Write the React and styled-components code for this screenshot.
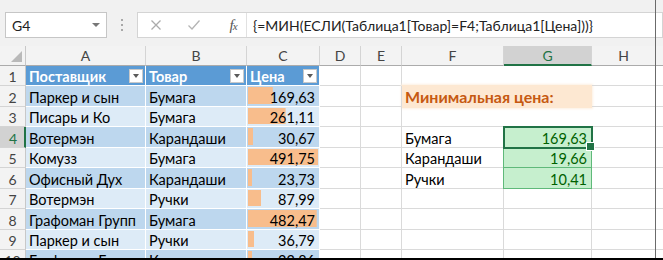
import React from 'react';
import styled, { createGlobalStyle, css } from 'styled-components';

const GlobalStyle = createGlobalStyle`
  html, body { margin: 0; padding: 0; background: #fff; }
  body { font-family: Lato, "Noto Sans", sans-serif; overflow: hidden; }
  * { box-sizing: border-box; }
`;

const COLS = [26, 120, 101, 73, 41, 41, 102, 88, 64];
const ROW_H = 20.44;
const GRID = '#dadada';
const FONT = '14.5px';

const Frame = styled.div`
  position: relative;
  width: 663px;
  height: 260px;
  overflow: hidden;
  display: flex;
  flex-direction: column;
  background: #fff;
  border-bottom: 2px solid #000;
  &::after {
    content: '';
    position: absolute;
    top: 0;
    bottom: 0;
    left: 655px;
    width: 1px;
    background: #6b6b6b;
  }
`;

const Toolbar = styled.div`
  height: 46px;
  flex: none;
  background: #f1f1f1;
  display: flex;
  align-items: flex-start;
  padding: 12px 0 0 5px;
`;

const NameBox = styled.div`
  width: 102px;
  height: 26px;
  background: #fff;
  border: 1px solid #c6c6c6;
  display: flex;
  align-items: center;
  justify-content: space-between;
  padding: 0 6px 0 6px;
  font-size: 14px;
  color: #222;
`;

const Caret = styled.span`
  width: 0;
  height: 0;
  border-left: 4px solid transparent;
  border-right: 4px solid transparent;
  border-top: 4px solid #777;
`;

const Grip = styled.div`
  width: 30px;
  height: 26px;
  display: flex;
  flex-direction: column;
  align-items: center;
  justify-content: center;
  gap: 3px;
`;

const GripDot = styled.span`
  width: 2px;
  height: 2px;
  background: #a8a8a8;
`;

const FormulaPanel = styled.div`
  flex: 1;
  height: 26px;
  background: #fff;
  border: 1px solid #d4d4d4;
  display: flex;
  align-items: stretch;
`;

const FxButtons = styled.div`
  width: 109px;
  display: flex;
  align-items: center;
  padding-left: 12px;
  border-right: 1px solid #e1e1e1;
`;

const IconSlot = styled.span`
  width: ${p => p.$w}px;
  display: flex;
  align-items: center;
  justify-content: center;
`;

const Fx = styled.span`
  font-family: "Liberation Serif", serif;
  font-style: italic;
  font-size: 15px;
  color: #555;
  letter-spacing: -1px;
  & small { font-size: 11px; }
`;

const FormulaText = styled.div`
  flex: 1;
  display: flex;
  align-items: center;
  padding-left: 6px;
  font-size: 14px;
  color: #222;
  white-space: nowrap;
  overflow: hidden;
`;

const Sheet = styled.div`
  flex: 1;
  display: grid;
  grid-template-columns: ${COLS.map(c => c + 'px').join(' ')} 1fr;
  grid-template-rows: 20px;
  grid-auto-rows: ${ROW_H}px;
  overflow: hidden;
  font-size: ${FONT};
`;

const Corner = styled.div`
  background: #f3f3f3;
  border-right: 1px solid #c8c8c8;
  border-bottom: 1px solid #ababab;
  display: flex;
  align-items: flex-end;
  justify-content: flex-end;
  padding: 0 3px 3px 0;
`;

const CornerTriangle = styled.span`
  width: 0;
  height: 0;
  border-left: 11px solid transparent;
  border-bottom: 11px solid #b9b9b9;
`;

const ColHead = styled.div`
  background: ${p => (p.$selected ? '#d2d2d2' : '#f3f3f3')};
  border-right: 1px solid #d4d4d4;
  border-bottom: ${p => (p.$selected ? '2px solid #217346' : '1px solid #ababab')};
  color: ${p => (p.$selected ? '#217346' : '#444')};
  display: flex;
  align-items: center;
  justify-content: center;
  font-size: 14px;
  padding-top: ${p => (p.$selected ? '1px' : '0')};
`;

const RowHead = styled.div`
  background: ${p => (p.$selected ? '#d2d2d2' : '#f3f3f3')};
  border-right: ${p => (p.$selected ? '2px solid #217346' : '1px solid #c8c8c8')};
  border-bottom: 1px solid #d4d4d4;
  color: ${p => (p.$selected ? '#217346' : '#444')};
  display: flex;
  align-items: flex-end;
  justify-content: center;
  line-height: 16px;
  font-size: 14px;
  padding-left: ${p => (p.$selected ? '2px' : '0')};
`;

const Cell = styled.div`
  border-right: 1px solid ${GRID};
  border-bottom: 1px solid ${GRID};
  display: flex;
  align-items: flex-end;
  justify-content: ${p => (p.$right ? 'flex-end' : 'flex-start')};
  padding: 0 ${p => (p.$right ? '4px' : '3px')} 0 3px;
  line-height: 16px;
  color: #000;
  white-space: nowrap;
  overflow: hidden;
`;

const TableHeadCell = styled(Cell)`
  background: #5b9bd5;
  border-color: #fff;
  color: #fff;
  font-weight: 700;
  justify-content: space-between;
  padding-right: 2px;
`;

const FilterButton = styled.span`
  align-self: center;
  flex: none;
  width: 14px;
  height: 14px;
  background: #fff;
  border: 1px solid #c9c9c9;
  display: flex;
  align-items: center;
  justify-content: center;
  &::before {
    content: '';
    border-left: 3.5px solid transparent;
    border-right: 3.5px solid transparent;
    border-top: 4px solid #5a5a5a;
  }
`;

const TableCell = styled(Cell)`
  background: ${p => (p.$dark ? '#bdd7ee' : '#ddebf7')};
  border-color: #fff;
`;

const BarCell = styled(TableCell)`
  justify-content: flex-end;
  padding-right: 4px;
  background-image: linear-gradient(#f8bd8c, #f8bd8c);
  background-repeat: no-repeat;
  background-position: 1px 1px;
  background-size: var(--bar) calc(100% - 3px);
`;

const TitleArea = styled.div`
  grid-column: 7 / span 2;
  grid-row: 2 / span 3;
  border-bottom: 1px solid ${GRID};
  background: #fff;
  display: flex;
  align-items: center;
  padding-top: 1px;
`;

const TitleBand = styled.div`
  flex: 1;
  height: 23px;
  background: #fde8d2;
  box-shadow: 0 0 2px 1px #fdf0e2;
  display: flex;
  align-items: center;
  padding-left: 3px;
  font-weight: 700;
  font-size: 16px;
  color: #c65911;
  white-space: nowrap;
`;

const ResultCell = styled(Cell)`
  justify-content: flex-end;
  padding-right: 4px;
  background: #c6efce;
  color: #006100;
  border-right-color: #5fb97a;
  border-bottom-color: #5fb97a;
  box-shadow: -1px 0 0 #5fb97a;
  ${p =>
    p.$selected &&
    css`
      position: relative;
      z-index: 2;
      overflow: visible;
      outline: 2px solid #217346;
      outline-offset: -1px;
      &::after {
        content: '';
        position: absolute;
        right: -4px;
        bottom: -4px;
        width: 7px;
        height: 7px;
        background: #217346;
        border: 1px solid #fff;
      }
    `}
`;

const Filler = styled.div`
  border-bottom: 1px solid ${GRID};
  background: ${p => (p.$head ? '#f3f3f3' : '#fff')};
  ${p => p.$head && 'border-bottom-color: #ababab;'}
`;

const CloseIcon = () => (
  <svg width="12" height="12" viewBox="0 0 12 12">
    <path d="M1.5 1.5 L10.5 10.5 M10.5 1.5 L1.5 10.5" stroke="#ababab" strokeWidth="1.3" fill="none" />
  </svg>
);

const CheckIcon = () => (
  <svg width="14" height="12" viewBox="0 0 14 12">
    <path d="M1.5 6.5 L5 10 L12.5 1.5" stroke="#b4b4b4" strokeWidth="1.3" fill="none" />
  </svg>
);

const data = [
  ['Паркер и сын', 'Бумага', 169.63],
  ['Писарь и Ко', 'Бумага', 261.11],
  ['Вотермэн', 'Карандаши', 30.67],
  ['Комузз', 'Бумага', 491.75],
  ['Офисный Дух', 'Карандаши', 23.73],
  ['Вотермэн', 'Ручки', 87.99],
  ['Графоман Групп', 'Бумага', 482.47],
  ['Паркер и сын', 'Ручки', 36.79],
  ['Графоман Групп', 'Карандаши', 22.86],
];

const results = {
  4: ['Бумага', 169.63],
  5: ['Карандаши', 19.66],
  6: ['Ручки', 10.41],
};

const MAX = 491.75;
const fmt = v => v.toFixed(2).replace('.', ',');
const LETTERS = ['A', 'B', 'C', 'D', 'E', 'F', 'G', 'H'];

export default function App() {
  const rows = [];
  for (let r = 1; r <= 10; r++) {
    const cells = [];
    cells.push(
      <RowHead key="h" $selected={r === 4}>
        {r}
      </RowHead>
    );
    if (r === 1) {
      ['Поставщик', 'Товар', 'Цена'].forEach(t =>
        cells.push(
          <TableHeadCell key={t}>
            <span>{t}</span>
            <FilterButton />
          </TableHeadCell>
        )
      );
    } else {
      const [who, what, price] = data[r - 2];
      const dark = r % 2 === 0;
      const bar = 1 + (price / MAX) * 69;
      cells.push(
        <TableCell key="a" $dark={dark}>
          {who}
        </TableCell>,
        <TableCell key="b" $dark={dark}>
          {what}
        </TableCell>,
        <BarCell key="c" $dark={dark} style={{ '--bar': `${bar}px` }}>
          {fmt(price)}
        </BarCell>
      );
    }
    cells.push(<Cell key="d" />, <Cell key="e" />);
    if (r === 1) {
      cells.push(
        <TitleArea key="title">
          <TitleBand>Минимальная цена:</TitleBand>
        </TitleArea>
      );
    } else if (r >= 4) {
      const res = results[r];
      if (res) {
        cells.push(
          <Cell key="f">{res[0]}</Cell>,
          <ResultCell key="g" $selected={r === 4}>
            {fmt(res[1])}
          </ResultCell>
        );
      } else {
        cells.push(<Cell key="f" />, <Cell key="g" />);
      }
    }
    cells.push(<Cell key="hcol" />, <Filler key="fill" />);
    rows.push(<React.Fragment key={r}>{cells}</React.Fragment>);
  }

  return (
    <>
      <GlobalStyle />
      <Frame>
        <Toolbar>
          <NameBox>
            <span>G4</span>
            <Caret />
          </NameBox>
          <Grip>
            <GripDot />
            <GripDot />
            <GripDot />
          </Grip>
          <FormulaPanel>
            <FxButtons>
              <IconSlot $w={12}>
                <CloseIcon />
              </IconSlot>
              <IconSlot $w={25} />
              <IconSlot $w={14}>
                <CheckIcon />
              </IconSlot>
              <IconSlot $w={22} />
              <IconSlot $w={20}>
                <Fx>
                  f<small>x</small>
                </Fx>
              </IconSlot>
            </FxButtons>
            <FormulaText>{'{=МИН(ЕСЛИ(Таблица1[Товар]=F4;Таблица1[Цена]))}'}</FormulaText>
          </FormulaPanel>
        </Toolbar>
        <Sheet>
          <Corner>
            <CornerTriangle />
          </Corner>
          {LETTERS.map(l => (
            <ColHead key={l} $selected={l === 'G'}>
              {l}
            </ColHead>
          ))}
          <Filler $head />
          {rows}
        </Sheet>
      </Frame>
    </>
  );
}
